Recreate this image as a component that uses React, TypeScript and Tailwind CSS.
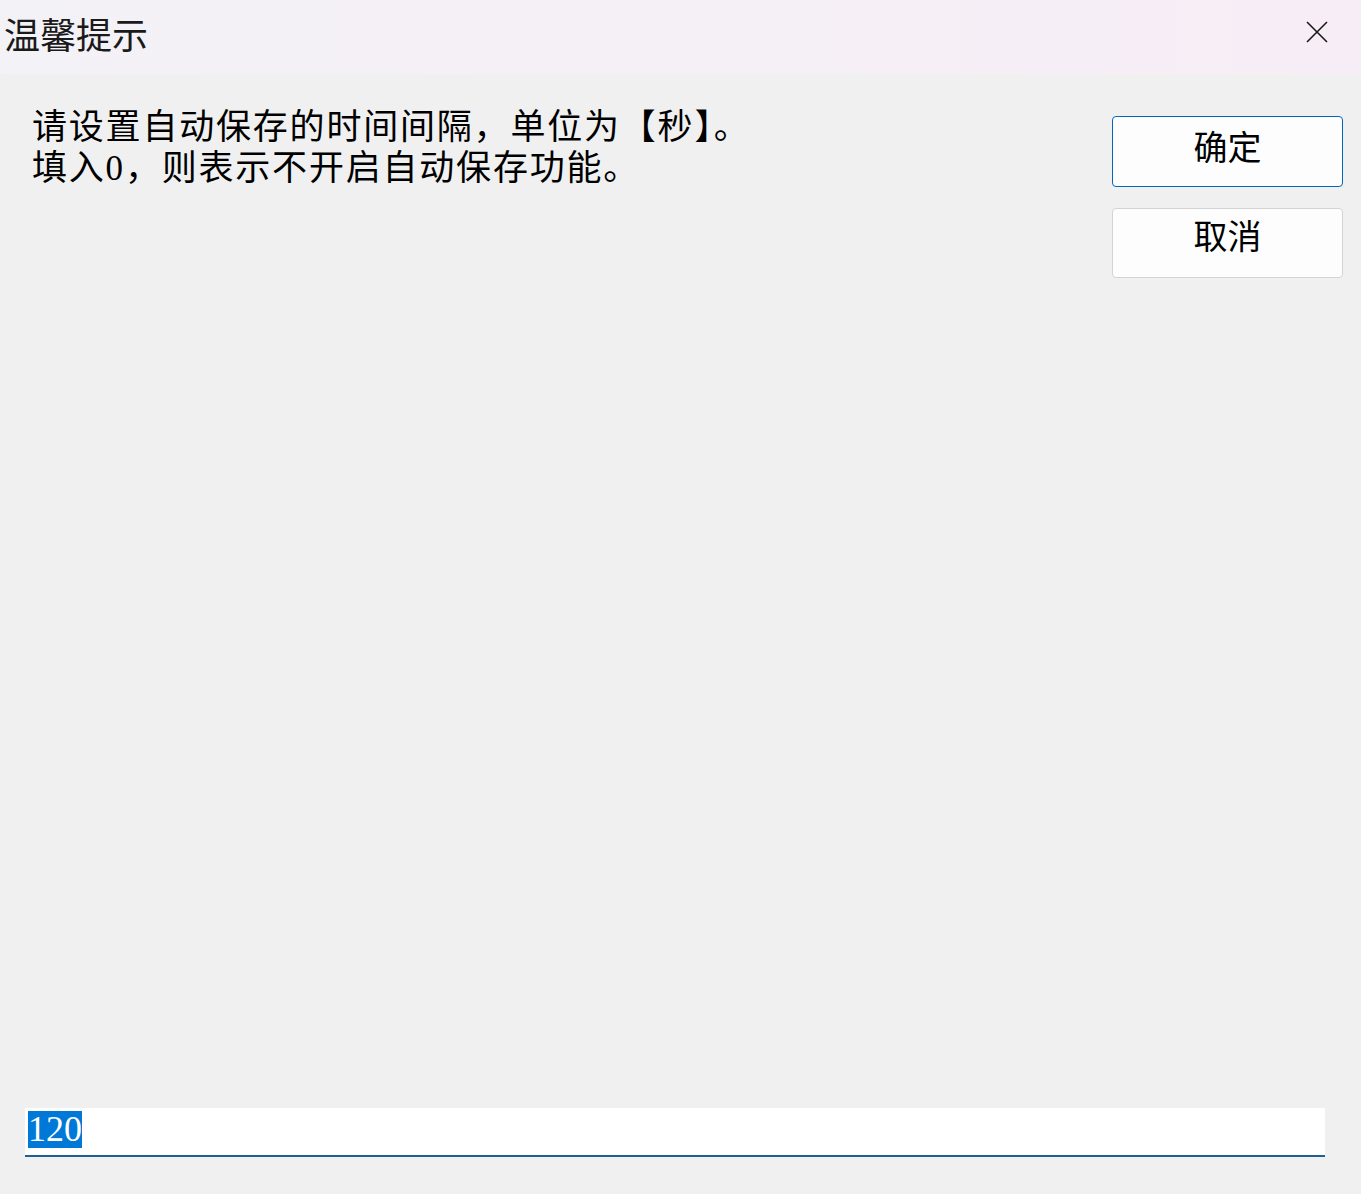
import React from 'react';

const serif = { fontFamily: '"Liberation Serif", "Noto Sans CJK SC", serif' };

export default function App() {
  return (
    <div className="w-[1361px] h-[1194px] flex flex-col bg-[#f0f0f0] overflow-hidden">
      {/* Title bar */}
      <div className="h-[74px] flex items-start justify-between bg-gradient-to-r from-[#f3f2f6] to-[#f7edf6] shrink-0">
        <h1
          className="pl-[4px] pt-[12px] text-[36px] leading-[42px] text-[#1a1a1a]"
          style={{ fontFamily: '"Noto Sans CJK SC", sans-serif' }}
        >
          温馨提示
        </h1>
        <button className="w-[46px] h-[46px] mt-[9px] mr-[21px] flex items-center justify-center">
          <svg width="22" height="22" viewBox="0 0 22 22" fill="none" stroke="#1a1a1a" strokeWidth="1.6">
            <path d="M1 1 L21 21 M21 1 L1 21" />
          </svg>
        </button>
      </div>

      {/* Body */}
      <div className="flex-1 flex justify-between pl-[32px] pr-[18px] pt-[33px]">
        <p className="text-[35px] leading-[41px] tracking-[1.8px] text-black" style={serif}>
          请设置自动保存的时间间隔，单位为【秒】。
          <br />
          填入0，则表示不开启自动保存功能。
        </p>
        <div className="flex flex-col gap-[21px] pt-[9px]">
          <button
            className="w-[231px] h-[71px] rounded-[4px] border border-[#0067c0] bg-[#fdfdfd] text-[34px] leading-none pb-[6px] text-black"
            style={serif}
          >
            确定
          </button>
          <button
            className="w-[231px] h-[70px] rounded-[4px] border border-[#d4d4d4] bg-[#fdfdfd] text-[34px] leading-none pb-[10px] text-black"
            style={serif}
          >
            取消
          </button>
        </div>
      </div>

      {/* Input */}
      <div className="pl-[25px] pr-[36px] pb-[37px]">
        <div className="h-[49px] bg-white border-b-2 border-[#1f5f94] flex items-center pl-[3px] pb-[4px]">
          <span className="bg-[#0078d7] text-white text-[36px] leading-[37px]" style={serif}>
            120
          </span>
        </div>
      </div>
    </div>
  );
}
